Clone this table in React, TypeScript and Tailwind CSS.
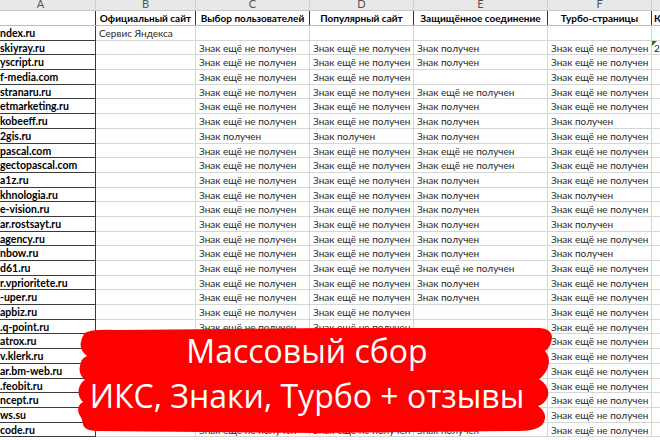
import React from "react";

const NP = "Знак ещё не получен";
const P = "Знак получен";

// [column A (scrolled, so cut on the left), B, C, D, E, F]
const rows: string[][] = [
  ["ndex.ru", "Сервис Яндекса", "", "", "", ""],
  ["skiyray.ru", "", NP, NP, P, NP],
  ["yscript.ru", "", NP, NP, P, NP],
  ["f-media.com", "", NP, NP, "", NP],
  ["stranaru.ru", "", NP, NP, NP, NP],
  ["etmarketing.ru", "", NP, NP, P, NP],
  ["kobeeff.ru", "", NP, NP, P, P],
  ["2gis.ru", "", P, P, P, NP],
  ["pascal.com", "", NP, NP, NP, NP],
  ["gectopascal.com", "", NP, NP, NP, NP],
  ["a1z.ru", "", NP, NP, P, NP],
  ["khnologia.ru", "", NP, NP, P, P],
  ["e-vision.ru", "", NP, NP, P, NP],
  ["ar.rostsayt.ru", "", NP, NP, P, P],
  ["agency.ru", "", NP, NP, P, NP],
  ["nbow.ru", "", NP, NP, P, P],
  ["d61.ru", "", NP, NP, NP, NP],
  ["r.vprioritete.ru", "", NP, NP, P, NP],
  ["-uper.ru", "", NP, NP, P, NP],
  ["apbiz.ru", "", NP, NP, "", NP],
  [".q-point.ru", "", NP, NP, "", NP],
  ["atrox.ru", "", NP, NP, P, NP],
  ["v.klerk.ru", "", NP, NP, P, NP],
  ["ar.bm-web.ru", "", NP, NP, P, NP],
  [".feobit.ru", "", NP, NP, P, NP],
  ["ncept.ru", "", NP, NP, P, NP],
  ["ws.su", "", NP, NP, P, NP],
  ["code.ru", "", NP, NP, P, NP],
];

const widths = ["w-[96px]", "w-[100px]", "w-[114px]", "w-[104px]", "w-[134px]", "w-[104px]"];
const letters = ["A", "B", "C", "D", "E", "F"];
const titles = ["", "Официальный сайт", "Выбор пользователей", "Популярный сайт", "Защищённое соединение", "Турбо-страницы"];

export default function App() {
  return (
    <div className="relative w-[660px] h-[440px] overflow-hidden bg-white text-[10px] text-[#2a2a2a] font-['Lato','Liberation_Sans',sans-serif]">
      {/* column letters */}
      <div className="flex h-[11px] bg-[#e8e8e8] border-b border-[#c8c8c8] text-[#555] text-[11px]">
        {letters.map((l, i) => (
          <div key={l} className={`${widths[i]} shrink-0 border-r border-[#cfcfcf] flex justify-center overflow-hidden ${i === 0 ? "pr-[14px]" : ""}`}>
            <span className="leading-[10px] -mt-[1px]">{l}</span>
          </div>
        ))}
        <div className="flex-1" />
      </div>

      {/* title row */}
      <div className="flex h-[15px] border-b border-[#bdbdbd]">
        {titles.map((t, i) => (
          <div key={i} className={`${widths[i]} shrink-0 border-r border-[#333] font-bold text-black leading-[15px] whitespace-nowrap overflow-hidden ${i === 0 ? "" : "text-center"}`}>
            {t}
          </div>
        ))}
        <div className="flex-1 font-bold text-black leading-[15px] pl-[2px]">К</div>
      </div>

      {/* data rows */}
      {rows.map((r, ri) => (
        <div key={ri} className="flex h-[14.7px]">
          {r.map((c, ci) => (
            <div
              key={ci}
              className={`${widths[ci]} shrink-0 leading-[14px] whitespace-nowrap overflow-hidden ${
                ci === 0
                  ? "border-b border-r border-[#3a3a3a] font-bold text-black text-[10.5px]"
                  : "border-b border-r border-[#d6d6d6] pl-[3px]"
              }`}
            >
              {c}
            </div>
          ))}
          <div className="relative flex-1 border-b border-[#d6d6d6] leading-[14px] pl-[2px]">
            {ri === 1 && (
              <>
                <span className="absolute left-0 top-0 w-0 h-0 border-t-[5px] border-r-[5px] border-t-[#1e7a34] border-r-transparent" />
                2
              </>
            )}
          </div>
        </div>
      ))}

      {/* red brush banner */}
      <div className="absolute left-[76px] top-[325px] w-[480px] h-[110px]">
        <svg className="absolute inset-0" width="480" height="110" viewBox="0 0 480 110">
          <path
            fill="#fe0000"
            d="M8 9 Q12 4 40 5 L250 3 L464 3 Q476 4 476 13 Q475 22 469 26 Q475 33 472 42 Q469 50 463 54 Q474 61 472 71 Q469 79 462 81 Q472 88 468 97 Q464 106 442 106 L240 108 L22 106 Q8 106 7 99 Q6 93 3 89 Q0 81 7 77 Q1 71 3 63 Q5 57 9 55 Q2 49 4 41 Q5 33 11 31 Q3 25 5 17 Q6 12 8 9 Z"
          />
        </svg>
        <div className="relative pt-[3px] pr-[18px] text-center text-white text-[32px] leading-[45px] font-['Open_Sans',sans-serif]">
          <div>Массовый сбор</div>
          <div>ИКС, Знаки, Турбо + отзывы</div>
        </div>
      </div>
    </div>
  );
}
